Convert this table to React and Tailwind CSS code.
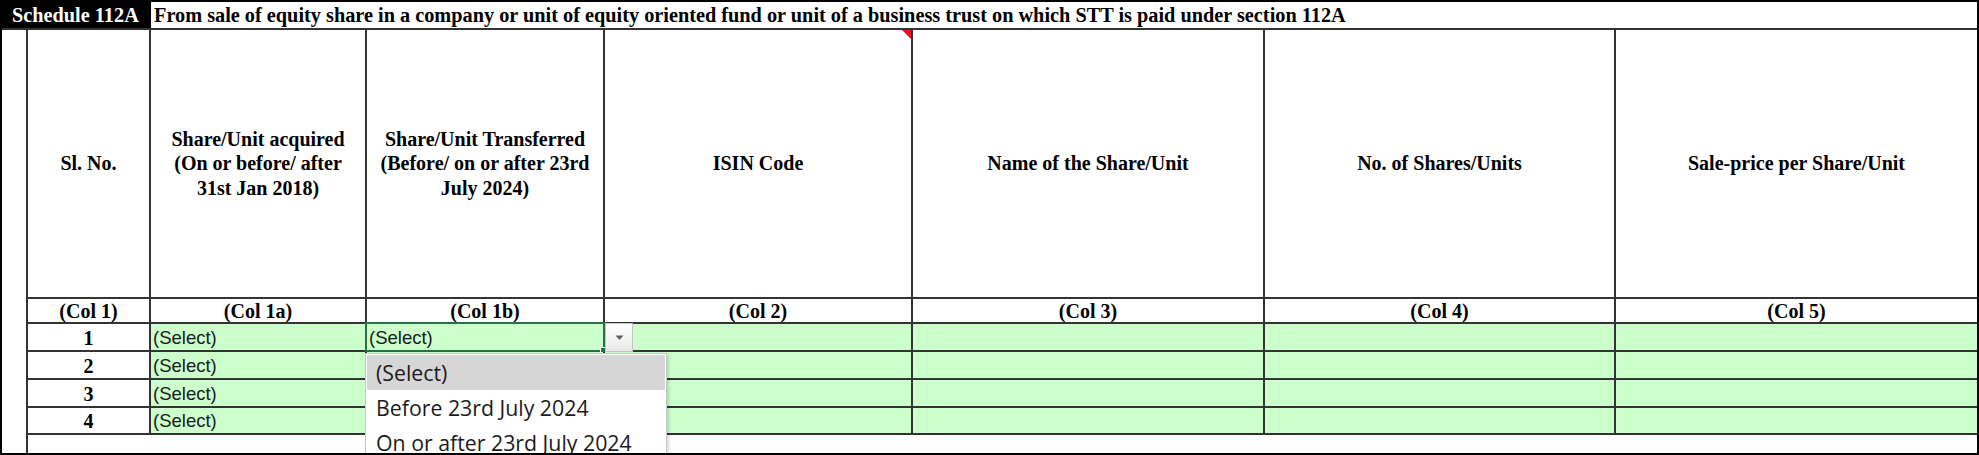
import React from "react";

const serif = "font-['Liberation_Serif','Times_New_Roman',serif] font-bold";
const line = "border-[#333]";

const headers = [
  { title: "Sl. No.", col: "(Col 1)" },
  {
    title: (
      <>
        Share/Unit acquired
        <br />
        (On or before/ after
        <br />
        31st Jan 2018)
      </>
    ),
    col: "(Col 1a)",
  },
  {
    title: (
      <>
        Share/Unit Transferred
        <br />
        (Before/ on or after 23rd
        <br />
        July 2024)
      </>
    ),
    col: "(Col 1b)",
  },
  { title: "ISIN Code", col: "(Col 2)", comment: true },
  { title: "Name of the Share/Unit", col: "(Col 3)" },
  { title: "No. of Shares/Units", col: "(Col 4)" },
  { title: "Sale-price per Share/Unit", col: "(Col 5)" },
];

const rows = [1, 2, 3, 4];
const options = ["(Select)", "Before 23rd July 2024", "On or after 23rd July 2024"];

const SelectCell = ({ active, hidden }) => (
  <div className="h-full flex items-end pb-[1px] pl-[2px] font-['Liberation_Sans',Arial,sans-serif] text-[18.5px] leading-[23px] text-[#1a1a1a]">
    {!hidden && "(Select)"}
    {active && (
      <>
        <div className="absolute left-[-2px] top-[-2px] right-[-2px] bottom-[-2px] border-2 border-[#217346] pointer-events-none" />
        <div className="absolute right-[-3px] bottom-[-3px] w-[6px] h-[6px] bg-[#217346] border border-white" />
        <div className="absolute left-[calc(100%+2px)] top-[-1px] w-[28px] h-[29px] bg-gradient-to-b from-white to-[#e9e9e9] border border-[#c3c3c3] flex items-center justify-center z-10">
          <svg width="9" height="6" viewBox="0 0 9 6">
            <polygon points="0.5,0.5 8.5,0.5 4.5,5" fill="#606060" />
          </svg>
        </div>
        <div className="absolute left-[-2px] top-[29px] w-[302px] bg-white border border-[#c6c6c6] p-[1px] z-20 shadow-[2px_2px_3px_rgba(0,0,0,0.15)]">
          {options.map((opt, i) => (
            <div
              key={opt}
              className={`h-[35px] flex items-center pl-[9px] font-['Open_Sans','Segoe_UI',sans-serif] text-[21.3px] text-[#1b1b1b] ${
                i === 0 ? "bg-[#d6d6d6]" : ""
              }`}
            >
              {opt}
            </div>
          ))}
        </div>
      </>
    )}
  </div>
);

const App = () => {
  return (
    <div className="w-[1979px] h-[455px] border-2 border-black bg-white overflow-hidden flex flex-col">
      {/* title bar */}
      <div className={`h-[28px] flex border-b-2 ${line} ${serif} text-[20.3px] leading-[26px] whitespace-nowrap`}>
        <div className="w-[149px] bg-black text-white pl-[10px]">Schedule 112A</div>
        <div className="flex-1 pl-[3px] text-black">
          From sale of equity share in a company or unit of equity oriented fund or unit of a business trust on which STT is paid under section 112A
        </div>
      </div>

      <div className="flex-1 flex">
        <div className={`w-[26px] border-r-2 ${line}`} />
        <div className="flex-1 flex flex-col">
          <div className="grid grid-cols-[123px_216px_238px_308px_352px_351px_361px]">
            {headers.map((h, i) => (
              <div
                key={i}
                className={`relative h-[269px] border-b-2 ${line} ${
                  i < headers.length - 1 ? "border-r-2" : ""
                } flex items-center justify-center text-center ${serif} text-[20px] leading-[24.5px] text-black`}
              >
                {h.title}
                {h.comment && (
                  <svg className="absolute right-0 top-0" width="9" height="9" viewBox="0 0 9 9">
                    <polygon points="0,0 9,0 9,9" fill="#e81123" />
                  </svg>
                )}
              </div>
            ))}
            {headers.map((h, i) => (
              <div
                key={`c${i}`}
                className={`h-[25px] border-b-2 ${line} ${
                  i < headers.length - 1 ? "border-r-2" : ""
                } flex items-end justify-center ${serif} text-[20px] leading-[22px] text-black`}
              >
                {h.col}
              </div>
            ))}
            {rows.map((r) =>
              headers.map((h, i) => (
                <div
                  key={`${r}-${i}`}
                  className={`relative ${r === 4 ? "h-[27px]" : "h-[28px]"} border-b-2 ${line} ${
                    i < headers.length - 1 ? "border-r-2" : ""
                  } ${i === 0 ? "bg-white" : "bg-[#ccffcc]"}`}
                >
                  {i === 0 && (
                    <div className={`h-full flex items-end justify-center pb-[1px] ${serif} text-[20px] leading-[22px] text-black`}>
                      {r}
                    </div>
                  )}
                  {(i === 1 || i === 2) && (
                    <SelectCell active={r === 1 && i === 2} hidden={r > 1 && i === 2} />
                  )}
                </div>
              ))
            )}
          </div>
          <div className="flex-1" />
        </div>
      </div>
    </div>
  );
};

export default App;
